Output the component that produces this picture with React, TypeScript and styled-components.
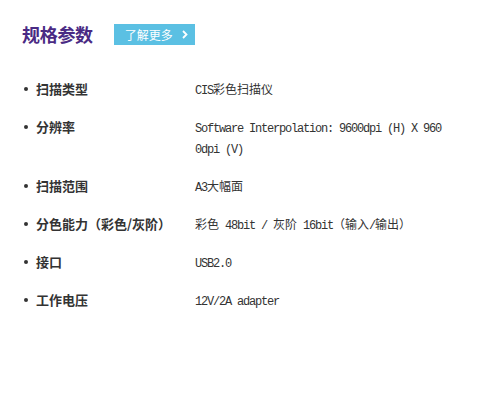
import React from "react";
import styled, { createGlobalStyle } from "styled-components";

const Global = createGlobalStyle`
  html, body { margin: 0; padding: 0; background: #fff; }
  body { font-family: "Noto Sans CJK SC", "Liberation Sans", sans-serif; color: #333; }
`;

const Page = styled.div`
  padding: 24px 0 0 22px;
  width: 485px;
  height: 403px;
  box-sizing: border-box;
`;

const Header = styled.div`
  display: flex;
  align-items: center;
  gap: 21px;
  height: 21px;
`;

const Title = styled.h2`
  margin: 0;
  font-size: 18px;
  font-weight: 700;
  line-height: 21px;
  color: #4a2a84;
  letter-spacing: -0.3px;
`;

const MoreButton = styled.a`
  display: flex;
  align-items: center;
  box-sizing: border-box;
  width: 81px;
  height: 21px;
  padding-left: 11px;
  background: #5bc0e3;
  color: #fff;
  font-size: 12px;
  line-height: 21px;
  text-decoration: none;
  gap: 9px;
`;

const List = styled.ul`
  list-style: none;
  margin: 33px 0 0 0;
  padding: 0;
  display: flex;
  flex-direction: column;
  gap: 17px;
`;

const Row = styled.li`
  display: grid;
  grid-template-columns: 14px 159px 250px;
  align-items: start;
`;

const Bullet = styled.span`
  width: 4px;
  height: 4px;
  border-radius: 50%;
  background: #333;
  margin: 9px 0 0 2px;
`;

const Label = styled.span`
  font-size: 13px;
  font-weight: 700;
  line-height: 21px;
  color: #333;
`;

const Value = styled.span`
  font-size: 12px;
  line-height: 21px;
  color: #333;
  word-break: break-all;
`;

const Ascii = styled.span`
  font-family: "Liberation Mono", monospace;
  letter-spacing: -1.2px;
  line-height: 1;
`;

const Cjk = styled.span`
  line-height: 1;
`;

function Mixed({ text }: { text: string }) {
  const parts = text.split(/([\x00-\x7f]+)/).filter((p) => p.length > 0);
  return (
    <>
      {parts.map((p, i) =>
        /^[\x00-\x7f]+$/.test(p) ? <Ascii key={i}>{p}</Ascii> : <Cjk key={i}>{p}</Cjk>
      )}
    </>
  );
}

const Chevron = () => (
  <svg width="6" height="9" viewBox="0 0 6 9">
    <path d="M1 1 L4.5 4.5 L1 8" stroke="#fff" strokeWidth="1.8" fill="none" />
  </svg>
);

const specs: [string, string][] = [
  ["扫描类型", "CIS彩色扫描仪"],
  ["分辨率", "Software Interpolation: 9600dpi (H) X 9600dpi (V)"],
  ["扫描范围", "A3大幅面"],
  ["分色能力（彩色/灰阶）", "彩色 48bit / 灰阶 16bit（输入/输出）"],
  ["接口", "USB2.0"],
  ["工作电压", "12V/2A adapter"],
];

export default function App() {
  return (
    <Page>
      <Global />
      <Header>
        <Title>规格参数</Title>
        <MoreButton href="#">
          了解更多
          <Chevron />
        </MoreButton>
      </Header>
      <List>
        {specs.map(([k, v]) => (
          <Row key={k}>
            <Bullet />
            <Label>{k}</Label>
            <Value>
              <Mixed text={v} />
            </Value>
          </Row>
        ))}
      </List>
    </Page>
  );
}
